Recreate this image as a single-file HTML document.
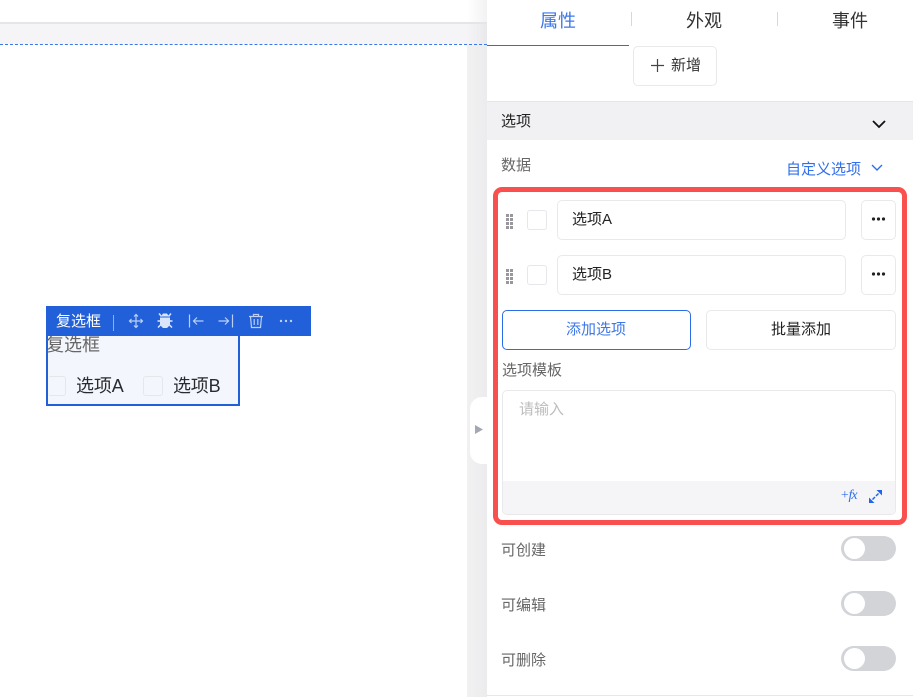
<!DOCTYPE html>
<html lang="zh"><head><meta charset="utf-8"><style>
html,body{margin:0;padding:0;width:913px;height:697px;overflow:hidden;background:#fff}
body{position:relative;font-family:"Liberation Sans","Noto Sans CJK SC",sans-serif}
div,span,svg{position:absolute;box-sizing:border-box}
.t{white-space:nowrap;line-height:20px;height:20px}
.b{background:#fff;border:1px solid #e9e9eb;border-radius:5px}
.cb{width:20px;height:20px;background:#fff;border:1px solid #e6e7ea;border-radius:3px}
.sw{left:841px;width:55px;height:25px;border-radius:13px;background:#d3d4d8}
.sw i{position:absolute;left:3px;top:2px;width:21px;height:21px;border-radius:50%;background:#fff}
.lab{left:501px;font-size:15px;color:#666}
</style></head><body>
<!-- canvas chrome -->
<div style="left:0;top:22px;width:487px;height:2px;background:#e5e5e7"></div>
<div style="left:0;top:24px;width:487px;height:20px;background:#f5f5f7"></div>
<div style="left:467px;top:0;width:20px;height:22px;background:linear-gradient(90deg,#fff,#f2f2f3)"></div>
<div style="left:467px;top:24px;width:20px;height:21px;background:linear-gradient(90deg,#f5f5f7,#e9e9eb)"></div>
<div style="left:467px;top:45px;width:20px;height:652px;background:linear-gradient(90deg,#f1f1f2,#ececee)"></div>
<div style="left:0;top:44px;width:487px;height:0;border-top:1px dashed #3b78ee"></div>
<div style="left:470px;top:397px;width:17px;height:67px;background:#fff;border-radius:12px 0 0 12px"></div>
<svg style="left:474px;top:424px" width="10" height="11"><path d="M1 1L9 5.500L1 10Z" fill="#a5a7b3"/></svg>

<!-- selected component -->
<div style="left:46px;top:330px;width:194px;height:76px;background:#f3f6fd;border:2px solid #2260d9;border-top:0"></div>
<div class="t" style="left:46px;top:335px;font-size:18px;color:#666">复选框</div>
<div class="cb" style="left:48px;top:376px;background:#f3f6fd;border-left:0;width:18px"></div>
<div class="t" style="left:76px;top:376px;font-size:18px;letter-spacing:-.1px;color:#2a2b30">选项A</div>
<div class="cb" style="left:143px;top:376px;background:#f3f6fd"></div>
<div class="t" style="left:173px;top:376px;font-size:18px;letter-spacing:-.2px;color:#2a2b30">选项B</div>
<div style="left:46px;top:306px;width:265px;height:30px;background:#2260d9"></div>
<div class="t" style="left:56px;top:312px;font-size:15px;color:#fff">复选框</div>
<div style="left:113px;top:315px;width:1px;height:16px;background:#8fb0ec"></div>
<svg style="left:128px;top:313px" width="170" height="16" viewBox="0 0 170 16" fill="none" stroke="#bcd0f5" stroke-width="1.200">
<path d="M8 1.500V14.500M1.500 8H14.500M6 3.500L8 1.500L10 3.500M6 12.500L8 14.500L10 12.500M3.500 6L1.500 8L3.500 10M12.500 6L14.500 8L12.500 10"/>
<path d="M35 0.500h4l2 3h-8zM32 4.500h10v7.500l-3 3h-4l-3-3z" fill="#dbe5fa" stroke="none"/>
<path d="M31 0.500l2.500 3M43 0.500l-2.500 3M29.500 8h3M41.500 8h3M30 14.500l2.500-2.500M44 14.500l-2.500-2.500" stroke="#dbe5fa" stroke-width="1.500"/>
<path d="M61.500 1.500V14.500M66 8H75.500M69 4.500L65.500 8L69 11.500"/>
<path d="M104.500 1.500V14.500M90.500 8H100.500M97 4.500L100.500 8L97 11.500"/>
<path d="M121 3.500H135M125.500 3.500V1.500H130.500V3.500M122.500 3.500L123.500 14.500H132.500L133.500 3.500M126.200 6V12M129.800 6V12"/>
<circle cx="153" cy="8" r="1.200" fill="#bcd0f5" stroke="none"/><circle cx="158" cy="8" r="1.200" fill="#bcd0f5" stroke="none"/><circle cx="163" cy="8" r="1.200" fill="#bcd0f5" stroke="none"/>
</svg>

<!-- tabs -->
<div class="t" style="left:540px;top:10px;font-size:18px;line-height:22px;height:22px;color:#3d77e8">属性</div>
<div class="t" style="left:686px;top:10px;font-size:18px;line-height:22px;height:22px;color:#333">外观</div>
<div class="t" style="left:832px;top:10px;font-size:18px;line-height:22px;height:22px;color:#333">事件</div>
<div style="left:631px;top:12px;width:1px;height:14px;background:#d8d8da"></div>
<div style="left:777px;top:12px;width:1px;height:14px;background:#d8d8da"></div>
<div style="left:487px;top:45px;width:142px;height:1px;background:#2b6de8"></div>
<div class="b" style="left:633px;top:46px;width:84px;height:40px"></div>
<svg style="left:650px;top:58px" width="15" height="15"><path d="M7.500 1V14M1 7.500H14" stroke="#444" stroke-width="1.200"/></svg>
<div class="t" style="left:671px;top:56px;font-size:15px;color:#333">新增</div>

<!-- section -->
<div style="left:487px;top:101px;width:426px;height:39px;background:#f1f1f3;border-top:1px solid #e6e6e8"></div>
<div class="t" style="left:501px;top:112px;font-size:15px;color:#222">选项</div>
<svg style="left:871px;top:119px" width="16" height="11"><path d="M2 2L8 8L14 2" fill="none" stroke="#111" stroke-width="1.800"/></svg>
<div class="t lab" style="top:156px">数据</div>
<div class="t" style="left:786px;top:160px;font-size:15px;color:#2f6fec">自定义选项</div>
<svg style="left:870px;top:163px" width="14" height="10"><path d="M2 2L7 7L12 2" fill="none" stroke="#2f6fec" stroke-width="1.400"/></svg>

<!-- red box -->
<div style="left:493px;top:187px;width:414px;height:338px;border:5px solid #f94f4f;border-radius:9px"></div>

<svg style="left:505px;top:214px" width="9" height="16" fill="#98989c"><path d="M1 0h3v3H1zM5 0h3v3H5zM1 4h3v3H1zM5 4h3v3H5zM1 8h3v3H1zM5 8h3v3H5zM1 12h3v3H1zM5 12h3v3H5z"/></svg>
<div class="cb" style="left:527px;top:210px"></div>
<div class="b" style="left:557px;top:200px;width:289px;height:40px"></div>
<div class="t" style="left:572px;top:210px;font-size:15px;color:#222">选项A</div>
<div class="b" style="left:861px;top:200px;width:35px;height:40px"></div>
<svg style="left:871px;top:216px" width="15" height="6" fill="#222"><circle cx="2.500" cy="3" r="1.600"/><circle cx="7.500" cy="3" r="1.600"/><circle cx="12.500" cy="3" r="1.600"/></svg>

<svg style="left:505px;top:269px" width="9" height="16" fill="#98989c"><path d="M1 0h3v3H1zM5 0h3v3H5zM1 4h3v3H1zM5 4h3v3H5zM1 8h3v3H1zM5 8h3v3H5zM1 12h3v3H1zM5 12h3v3H5z"/></svg>
<div class="cb" style="left:527px;top:265px"></div>
<div class="b" style="left:557px;top:255px;width:289px;height:40px"></div>
<div class="t" style="left:572px;top:265px;font-size:15px;color:#222">选项B</div>
<div class="b" style="left:861px;top:255px;width:35px;height:40px"></div>
<svg style="left:871px;top:271px" width="15" height="6" fill="#222"><circle cx="2.500" cy="3" r="1.600"/><circle cx="7.500" cy="3" r="1.600"/><circle cx="12.500" cy="3" r="1.600"/></svg>

<div class="b" style="left:502px;top:310px;width:189px;height:40px;border-color:#2b6de8"></div>
<div class="t" style="left:566px;top:320px;font-size:15px;color:#3d77e8">添加选项</div>
<div class="b" style="left:706px;top:310px;width:190px;height:40px"></div>
<div class="t" style="left:771px;top:320px;font-size:15px;color:#222">批量添加</div>

<div class="t lab" style="left:502px;top:361px">选项模板</div>
<div class="b" style="left:502px;top:390px;width:394px;height:125px;overflow:hidden">
  <div style="left:0;top:90px;width:392px;height:33px;background:#f5f5f8"></div>
</div>
<div class="t" style="left:519px;top:400px;font-size:15px;color:#bdbdbd">请输入</div>
<div class="t" style="left:840px;top:486px;font-size:14px;letter-spacing:-1px;font-style:italic;font-family:'Liberation Serif',serif;color:#2f6fec">+fx</div>
<svg style="left:868px;top:489px" width="15" height="15"><path d="M14 1V6.500L8.500 1Z" fill="#1f66ee"/><path d="M1 14V8.500L6.500 14Z" fill="#1f66ee"/><path d="M10.500 4.500L8 7M7 8L4.500 10.500" stroke="#1f66ee" stroke-width="1.500" fill="none"/></svg>

<!-- toggles -->
<div class="t lab" style="top:541px">可创建</div>
<div class="sw" style="top:536px"><i></i></div>
<div class="t lab" style="top:596px">可编辑</div>
<div class="sw" style="top:591px"><i></i></div>
<div class="t lab" style="top:651px">可删除</div>
<div class="sw" style="top:646px"><i></i></div>
<div style="left:487px;top:695px;width:426px;height:1px;background:#e8e8ea"></div>
</body></html>
